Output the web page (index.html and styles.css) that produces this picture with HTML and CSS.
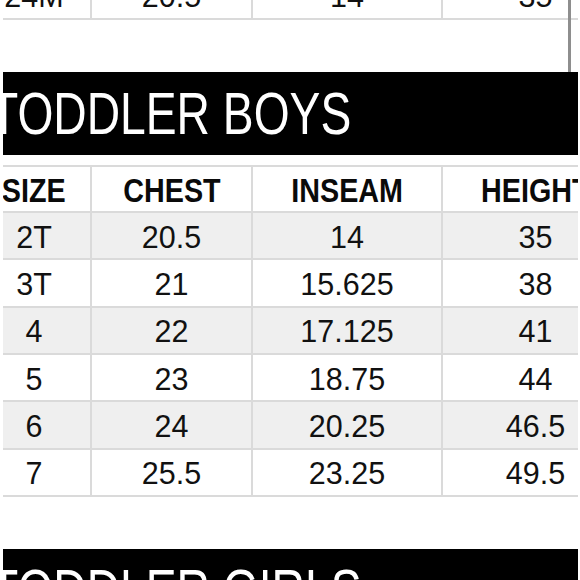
FILE: index.html
```html
<!DOCTYPE html>
<html>
<head>
<meta charset="utf-8">
<link rel="stylesheet" href="styles.css">
</head>
<body>
<div class="page">
  <div class="inner">
    <div class="table prev">
      <div class="row">
        <div class="cell">24M</div><div class="cell">20.5</div><div class="cell">14</div><div class="cell">35</div>
      </div>
    </div>

    <div class="banner"><span class="banner-text">TODDLER BOYS</span></div>

    <div class="table">
      <div class="row head">
        <div class="cell"><span class="hd">SIZE</span></div>
        <div class="cell"><span class="hd">CHEST</span></div>
        <div class="cell"><span class="hd">INSEAM</span></div>
        <div class="cell"><span class="hd">HEIGHT</span></div>
      </div>
      <div class="row stripe"><div class="cell">2T</div><div class="cell">20.5</div><div class="cell">14</div><div class="cell">35</div></div>
      <div class="row"><div class="cell">3T</div><div class="cell">21</div><div class="cell">15.625</div><div class="cell">38</div></div>
      <div class="row stripe"><div class="cell">4</div><div class="cell">22</div><div class="cell">17.125</div><div class="cell">41</div></div>
      <div class="row"><div class="cell">5</div><div class="cell">23</div><div class="cell">18.75</div><div class="cell">44</div></div>
      <div class="row stripe"><div class="cell">6</div><div class="cell">24</div><div class="cell">20.25</div><div class="cell">46.5</div></div>
      <div class="row"><div class="cell">7</div><div class="cell">25.5</div><div class="cell">23.25</div><div class="cell">49.5</div></div>
    </div>

    <div class="banner second"><span class="banner-text">TODDLER GIRLS</span></div>
  </div>
</div>
</body>
</html>
```

FILE: styles.css
```css
html, body {
  margin: 0;
  padding: 0;
  background: #ffffff;
}

body {
  font-family: "Liberation Sans", Arial, sans-serif;
  color: #111111;
  height: 580px;
  overflow: hidden;
}

.page {
  position: relative;
  margin-left: 3px;
  width: 575px;
  height: 580px;
  overflow: hidden;
}

.page::after {
  content: "";
  position: absolute;
  left: 565px;
  top: 0;
  width: 3px;
  height: 72px;
  background: #8e8e8e;
}

.inner {
  margin-left: -25px;
  width: 650px;
}

.table {
  display: flex;
  flex-direction: column;
}

.prev {
  margin-top: -28px;
}

.row {
  display: grid;
  grid-template-columns: 114px 161px 190px 185px;
  height: 47.33px;
  box-sizing: border-box;
  border-bottom: 2px solid #dadada;
}

.prev .row {
  height: 48px;
}

.row.head {
  height: 48px;
  border-top: 2px solid #dadada;
}

.stripe {
  background: #efefef;
}

.cell {
  display: flex;
  align-items: center;
  justify-content: center;
  padding-top: 3px;
  box-sizing: border-box;
  font-size: 30.5px;
  border-right: 2px solid #dadada;
  white-space: nowrap;
}

.cell:last-child {
  border-right: none;
}

.hd {
  display: inline-block;
  font-weight: bold;
  font-size: 33px;
  transform: scaleX(0.87);
  color: #0a0a0a;
}

.banner {
  margin-top: 52px;
  height: 83px;
  background: #000000;
  display: flex;
  align-items: center;
  padding-left: 12px;
  margin-bottom: 10px;
}

.banner-text {
  display: inline-block;
  color: #ffffff;
  font-size: 58.5px;
  line-height: 1;
  padding-top: 2px;
  transform: scaleX(0.79);
  transform-origin: left center;
  white-space: nowrap;
}
```
